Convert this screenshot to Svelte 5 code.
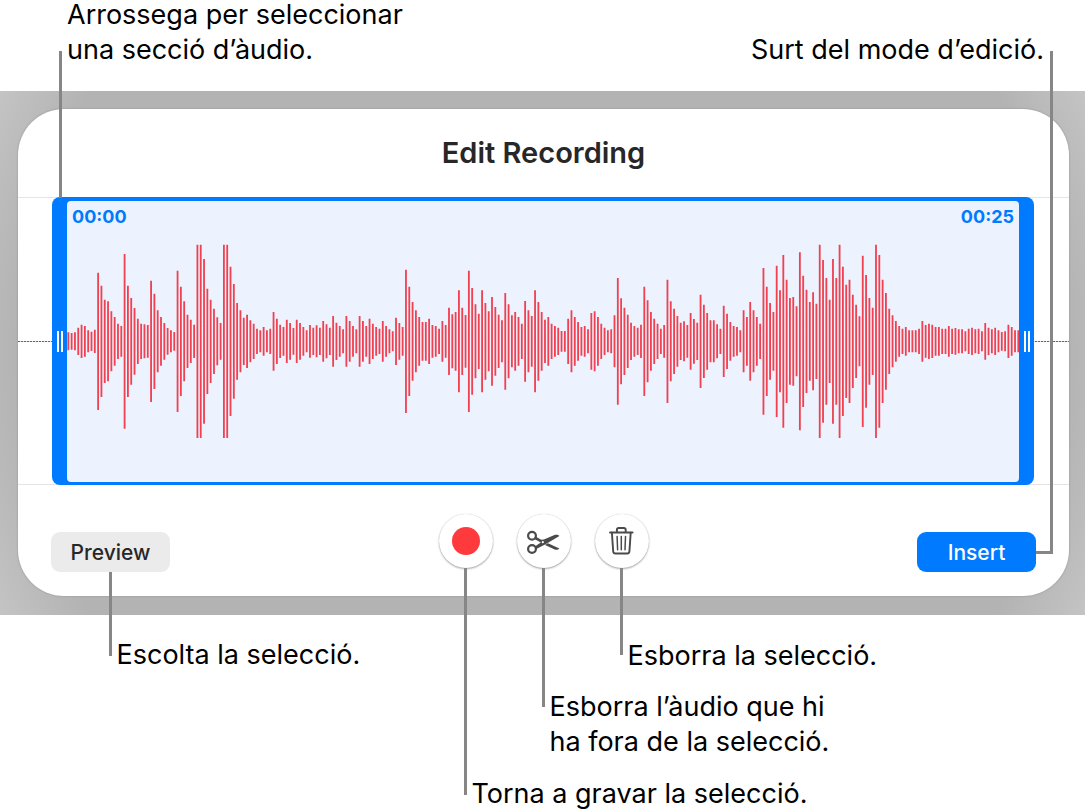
<script>
  let start = '00:00'
  let end = '00:25'

  // upper tip of every bar, the lower one mirrors it around MIDDLE
  const MIDDLE = 454
  const peaks = [
    427, 429, 427, 413, 404, 408, 421, 425, 419, 248, 287, 329, 334, 364, 381, 401, 408,
    192, 287, 324, 354, 386, 401, 403, 405, 272, 311, 361, 381, 399, 414, 421, 426, 242,
    290, 334, 374, 389, 404, 164, 164, 207, 296, 329, 356, 382, 399, 164, 164, 230, 282,
    339, 361, 383, 374, 391, 401, 416, 421, 411, 421, 416, 366, 386, 404, 411, 389, 399,
    414, 389, 399, 411, 421, 405, 413, 406, 413, 393, 403, 413, 378, 398, 408, 418, 378,
    393, 408, 418, 378, 393, 408, 386, 401, 411, 416, 393, 408, 418, 424, 383, 399, 411,
    239, 290, 336, 361, 381, 396, 396, 386, 405, 408, 416, 393, 405, 353, 373, 366, 301,
    353, 375, 242, 294, 343, 371, 301, 339, 364, 321, 351, 374, 391, 309, 343, 376, 366,
    381, 401, 333, 361, 378, 301, 336, 366, 389, 381, 401, 408, 413, 423, 423, 386, 361,
    381, 396, 411, 408, 418, 369, 364, 381, 401, 413, 421, 418, 376, 264, 325, 353, 374,
    398, 408, 413, 404, 290, 331, 366, 386, 401, 416, 405, 269, 334, 356, 378, 398, 394,
    405, 369, 387, 398, 314, 344, 369, 391, 391, 403, 416, 347, 371, 396, 408, 411, 421,
    361, 381, 336, 361, 381, 401, 234, 290, 339, 366, 227, 301, 195, 269, 324, 321, 349,
    187, 257, 299, 336, 307, 341, 164, 210, 264, 329, 207, 264, 164, 230, 284, 269, 314,
    344, 379, 197, 255, 324, 353, 164, 195, 269, 309, 356, 376, 393, 408, 416, 411, 421,
    421, 421, 416, 393, 405, 401, 404, 411, 411, 416, 416, 408, 416, 414, 418, 418, 424,
    416, 413, 418, 416, 424, 399, 413, 418, 413, 421, 426, 424, 404, 411, 421, 421
  ]

  const wave = peaks
    .map((top, i) => `M${i * 10 + 4} ${top}V${MIDDLE * 2 - top}`)
    .join('')
</script>

<main>
  <div class="notes">
    <p class="note note--start">Arrossega per seleccionar<br />una secció d’àudio.</p>
    <p class="note note--end">Surt del mode d’edició.</p>
  </div>

  <div class="backdrop">
    <section class="card" aria-labelledby="title">
      <h1 id="title">Edit Recording</h1>

      <div class="track">
        <div class="selection">
          <button class="handle" aria-label="Selection start"></button>
          <div class="clip">
            <div class="times">
              <time>{start}</time>
              <time>{end}</time>
            </div>
            <svg class="wave" viewBox="0 33 {peaks.length * 10 - 4} 843" preserveAspectRatio="none" aria-hidden="true">
              <path d={wave} />
            </svg>
          </div>
          <button class="handle" aria-label="Selection end"></button>
        </div>
        <span class="leader leader--drag"></span>
      </div>

      <div class="toolbar">
        <div class="control control--left">
          <button class="btn">Preview</button>
          <p class="callout callout--preview">Escolta la selecció.</p>
        </div>
        <div class="tools">
          <div class="control">
            <button class="round" aria-label="Record"><span class="dot"></span></button>
            <p class="callout callout--record">Torna a gravar la selecció.</p>
          </div>
          <div class="control">
            <button class="round" aria-label="Trim">
              <svg viewBox="0 0 54 54" aria-hidden="true">
                <g fill="none" stroke="#4a4a4a" stroke-width="2.2">
                  <circle cx="15" cy="21.7" r="3.9" />
                  <circle cx="15" cy="35" r="3.9" />
                </g>
                <path fill="#4a4a4a" d="M18.500 22.400l5.800 3.400 2.600-.4L37.500 21.100c1.900-.7 3.900-.4 4.900.8L28.500 30.200 19.300 35l-1.500-2.500 6-4.100-6.300-3.400zM28 31.100l3-1.900 11.400 5.300c-1.200 1.400-3 1.700-4.700 1z" />
                <circle cx="25.800" cy="28.200" r="1.100" fill="#fff" />
              </svg>
            </button>
            <p class="callout callout--trim">Esborra l’àudio que hi<br />ha fora de la selecció.</p>
          </div>
          <div class="control">
            <button class="round" aria-label="Delete">
              <svg viewBox="0 0 54 54" aria-hidden="true">
                <g fill="none" stroke="#4a4a4a" stroke-width="1.900" stroke-linecap="round" stroke-linejoin="round">
                  <path d="M15 18.500h22.600M21.900 18.300v-2.400q0-1.900 1.900-1.900h5q1.900 0 1.900 1.900v2.400" />
                  <path d="M16.900 18.700l1.300 18.800q.2 2 2.200 2h11.800q2 0 2.200-2l1.300-18.800" />
                  <path stroke-width="1.500" d="M22.100 22.500l.5 13.200M26.300 22.500v13.200M30.500 22.500l-.5 13.200" />
                </g>
              </svg>
            </button>
            <p class="callout callout--delete">Esborra la selecció.</p>
          </div>
        </div>
        <div class="control control--right">
          <button class="btn btn--primary">Insert</button>
          <span class="leader leader--exit"></span>
        </div>
      </div>
    </section>
  </div>
</main>

<style>
  :global(body) {
    margin: 0;
    background: #fff;
  }

  main {
    --blue: #007aff;
    --line: #868686;
    box-sizing: border-box;
    padding: 0 2px 196px 0;
    font-family: Inter, "Liberation Sans", sans-serif;
    color: #000;
  }

  p,
  h1 {
    margin: 0;
  }

  button {
    padding: 0;
    border: 0;
    font: inherit;
    cursor: pointer;
  }

  .notes {
    display: flex;
    justify-content: space-between;
    align-items: flex-end;
    padding: 0 41px 24px 67px;
  }

  .note,
  .callout {
    font-size: 27px;
    line-height: 35px;
    white-space: nowrap;
  }

  .note--start {
    margin-top: -3px;
  }

  .backdrop {
    padding: 18px 16px 19px 18px;
    background: radial-gradient(circle, #b3b3b3 calc(100% - 80px), #c4c4c4);
  }

  .card {
    border-radius: 46px;
    background: #fff;
    box-shadow: 0 0 2px #8c8c8c;
  }

  h1 {
    font-size: 29px;
    font-weight: 600;
    line-height: 88px;
    text-align: center;
    color: #272727;
  }

  /* Waveform */
  .track {
    position: relative;
    padding: 0 35px 0 34px;
    border-top: 1px solid #e4e4e4;
    border-bottom: 1px solid #e4e4e4;
  }

  .track::before {
    content: "";
    position: absolute;
    top: 143px;
    left: 0;
    right: 0;
    height: 1px;
    background: repeating-linear-gradient(to right, #666 0 2px, #ddd 2px 3px);
  }

  .selection {
    position: relative;
    display: flex;
    margin: -1px 0;
    padding: 4px 0 3px;
    border-radius: 8px;
    background: var(--blue);
  }

  .handle {
    display: flex;
    justify-content: center;
    align-items: center;
    width: 15px;
    background: none;
    cursor: ew-resize;
  }

  .handle::before {
    content: "";
    width: 2px;
    height: 21px;
    border: solid #fff;
    border-width: 0 2px;
  }

  .clip {
    flex: 1;
    min-width: 0;
    position: relative;
    border-radius: 4px;
    background: #ecf3ff;
  }

  .times {
    position: absolute;
    top: 5px;
    left: 5px;
    right: 5px;
    display: flex;
    justify-content: space-between;
    font-size: 18px;
    font-weight: 700;
    line-height: 22px;
    color: var(--blue);
  }

  .wave {
    display: block;
    width: 100%;
    height: 281px;
  }

  .wave path {
    fill: none;
    stroke: #f04150;
    stroke-width: 5.5;
  }

  /* Buttons */
  .toolbar {
    display: grid;
    grid-template-columns: 1fr auto 1fr;
    align-items: start;
    padding: 29px 33px 24px;
  }

  .control {
    position: relative;
  }

  .control--left,
  .control--right {
    width: 119px;
    margin-top: 18px;
  }

  .control--right {
    justify-self: end;
  }

  .tools {
    display: flex;
    gap: 24px;
  }

  .btn {
    display: block;
    width: 100%;
    height: 40px;
    border-radius: 9px;
    background: #ebebeb;
    color: #272727;
    font-size: 21px;
    font-weight: 500;
  }

  .btn--primary {
    background: var(--blue);
    color: #fff;
  }

  .round {
    display: flex;
    justify-content: center;
    align-items: center;
    width: 54px;
    height: 54px;
    border-radius: 50%;
    background: #fff;
    box-shadow: 0 1px 2px rgba(0, 0, 0, 0.35), 0 0 1px rgba(0, 0, 0, 0.2);
  }

  .round svg {
    width: 54px;
    height: 54px;
  }

  .dot {
    width: 28px;
    height: 28px;
    border-radius: 50%;
    background: #ff3a3c;
  }

  /* Callouts hang under the control they describe */
  .callout {
    position: absolute;
    top: 100%;
    left: calc(50% - 2px);
    padding-left: 8px;
  }

  .callout::before {
    content: "";
    position: absolute;
    top: 0;
    left: 0;
    height: var(--drop);
    border-left: 3px solid var(--line);
  }

  .callout--preview {
    --drop: 84px;
    padding-top: 65px;
  }

  .callout--record {
    --drop: 227px;
    padding-top: 208px;
  }

  .callout--trim {
    --drop: 139px;
    padding-top: 121px;
  }

  .callout--delete {
    --drop: 87px;
    padding-top: 70px;
  }

  .leader {
    position: absolute;
    box-sizing: border-box;
    border: 0 solid var(--line);
  }

  .leader--drag {
    left: 41px;
    bottom: 100%;
    height: 147px;
    border-left-width: 3px;
  }

  .leader--exit {
    left: 100%;
    bottom: 18px;
    width: 17px;
    height: 503px;
    border-width: 0 3px 3px 0;
  }
</style>
